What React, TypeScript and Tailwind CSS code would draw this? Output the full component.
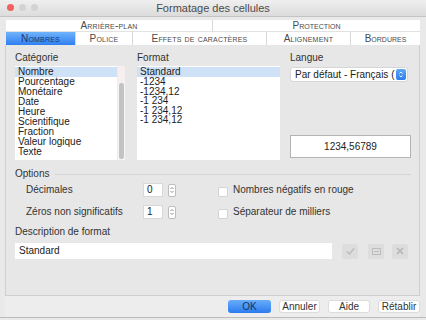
import React from "react";

const font = { fontFamily: '"Liberation Sans", Arial, sans-serif' };

function Stepper() {
  return (
    <div className="w-[8px] h-[13px] bg-white border border-[#bdbdbd] rounded-[2px] flex items-center justify-center">
      <svg width="6" height="10" viewBox="0 0 6 10">
        <path d="M1.5 4 L3 2.5 L4.5 4" fill="none" stroke="#7a7a7a" strokeWidth="0.8" />
        <path d="M1.5 6 L3 7.5 L4.5 6" fill="none" stroke="#7a7a7a" strokeWidth="0.8" />
      </svg>
    </div>
  );
}

function Tab({ label, w, selected }: { label: string; w: string; selected?: boolean }) {
  return (
    <div
      className={
        "h-full flex items-center justify-center text-[10px] [font-variant:small-caps] tracking-[0.2px] border-r border-[#d8d8d8] " +
        w +
        (selected
          ? " bg-gradient-to-b from-[#6fb2fb] to-[#2f7ff1] text-[#18386e]"
          : " text-[#4a4a4a]")
      }
    >
      {label}
    </div>
  );
}

export default function App() {
  const categories = [
    "Nombre",
    "Pourcentage",
    "Monétaire",
    "Date",
    "Heure",
    "Scientifique",
    "Fraction",
    "Valeur logique",
    "Texte",
  ];
  const formats = ["Standard", "-1234", "-1234,12", "-1 234", "-1 234,12", "-1 234,12"];

  return (
    <div className="w-[426px] h-[320px] bg-[#e9e9e9] flex flex-col overflow-hidden text-[#222]" style={font}>
      {/* Title bar */}
      <div className="relative h-[17px] bg-gradient-to-b from-[#efefef] to-[#dcdcdc] border-b border-[#c4c4c4] flex items-center justify-center shrink-0">
        <div className="absolute left-[7px] top-[4px] flex gap-[5px]">
          <div className="w-[7px] h-[7px] rounded-full bg-[#f0625c]" />
          <div className="w-[7px] h-[7px] rounded-full bg-[#d3d3d3]" />
          <div className="w-[7px] h-[7px] rounded-full bg-[#d3d3d3]" />
        </div>
        <span className="text-[11px] text-[#4b4b4b] leading-none">Formatage des cellules</span>
      </div>

      <div className="h-[3px] shrink-0" />

      {/* Tabs row 1 */}
      <div className="ml-[6px] w-[414px] h-[11px] bg-white flex shrink-0">
        <Tab label="Arrière-plan" w="w-[207px]" />
        <div className="h-full w-[207px] flex items-center justify-center text-[10px] [font-variant:small-caps] text-[#4a4a4a]">
          Protection
        </div>
      </div>
      {/* Tabs row 2 */}
      <div className="ml-[6px] w-[414px] h-[14px] bg-white flex shrink-0 border-t border-[#e2e2e2]">
        <Tab label="Nombres" w="w-[70px]" selected />
        <Tab label="Police" w="w-[57px]" />
        <Tab label="Effets de caractères" w="w-[134px]" />
        <Tab label="Alignement" w="w-[84px]" />
        <div className="h-full w-[69px] flex items-center justify-center text-[10px] [font-variant:small-caps] text-[#4a4a4a]">
          Bordures
        </div>
      </div>

      {/* Panel */}
      <div className="ml-[5px] w-[415px] h-[251px] bg-[#e7e7e7] border-l border-r border-b border-[#cfcfcf] pl-[9px] pt-[7px] flex flex-col shrink-0 text-[10px]">
        <div className="flex">
          {/* Catégorie */}
          <div className="w-[110px] flex flex-col">
            <div className="h-[14px] leading-[11px] text-[#333]">Catégorie</div>
            <div className="h-[94px] bg-white flex">
              <div className="flex-1 pt-[1px]">
                {categories.map((c, i) => (
                  <div
                    key={c}
                    className={"h-[10px] leading-[10px] pl-[3px] " + (i === 0 ? "bg-[#cfe1f6]" : "")}
                  >
                    {c}
                  </div>
                ))}
              </div>
              <div className="w-[8px] flex flex-col bg-[#f6f6f6] border-l border-[#ececec]">
                <div className="h-[17px] bg-[#f7efee]" />
                <div className="flex-1 flex justify-center pb-[1px]">
                  <div className="w-[5px] h-full bg-[#c3c3c3] rounded-[2px]" />
                </div>
              </div>
            </div>
          </div>

          {/* Format */}
          <div className="w-[143px] ml-[12px] flex flex-col">
            <div className="h-[14px] leading-[11px] text-[#333]">Format</div>
            <div className="h-[94px] bg-white pt-[1px]">
              {formats.map((f, i) => (
                <div
                  key={i}
                  className={"h-[9.5px] leading-[9.5px] pl-[3px] " + (i === 0 ? "bg-[#cfe1f6] h-[10px] leading-[10px]" : "")}
                >
                  {f}
                </div>
              ))}
            </div>
          </div>

          {/* Langue */}
          <div className="w-[121px] ml-[10px] flex flex-col">
            <div className="h-[15px] leading-[11px] text-[#333]">Langue</div>
            <div className="w-[118px] h-[15px] bg-white rounded-[3px] border border-[#d6d6d6] flex items-center pl-[4px] pr-[1px]">
              <span className="flex-1 truncate leading-none">Par défaut - Français (</span>
              <div className="w-[10px] h-[11px] rounded-[2px] bg-gradient-to-b from-[#5fa8f7] to-[#2d7cf0] flex items-center justify-center">
                <svg width="6" height="9" viewBox="0 0 6 9">
                  <path d="M1.5 3.5 L3 2 L4.5 3.5" fill="none" stroke="white" strokeWidth="0.9" />
                  <path d="M1.5 5.5 L3 7 L4.5 5.5" fill="none" stroke="white" strokeWidth="0.9" />
                </svg>
              </div>
            </div>
            <div className="mt-[53px] w-[121px] h-[23px] bg-white border border-[#b4b4b4] flex items-center justify-center">
              1234,56789
            </div>
          </div>
        </div>

        {/* Options header */}
        <div className="mt-[8px] h-[12px] flex items-center pr-[8px]">
          <span className="leading-none text-[#333]">Options</span>
          <div className="flex-1 ml-[6px] h-px bg-[#d4d4d4]" />
        </div>

        <div className="mt-[3px] pl-[11px] flex flex-col gap-[8px]">
          {[
            ["Décimales", "0", "Nombres négatifs en rouge"],
            ["Zéros non significatifs", "1", "Séparateur de milliers"],
          ].map(([l, v, c]) => (
            <div key={l} className="h-[14px] flex items-center">
              <span className="w-[117px] leading-none text-[#333]">{l}</span>
              <div className="w-[20px] h-[14px] bg-white border border-[#d8d8d8] flex items-center pl-[3px] leading-none">
                {v}
              </div>
              <div className="ml-[5px]">
                <Stepper />
              </div>
              <div className="ml-[42px] w-[10px] h-[10px] bg-white rounded-[2px] border border-[#d4d4d4] mt-[3px]" />
              <span className="ml-[5px] leading-none text-[#333]">{c}</span>
            </div>
          ))}
        </div>

        <div className="mt-[7px] h-[12px] flex items-center leading-none text-[#333]">Description de format</div>
        <div className="mt-[5px] flex items-center">
          <div className="w-[317px] h-[16px] bg-white flex items-center pl-[4px] leading-none">Standard</div>
          <div className="ml-[10px] w-[16px] h-[15px] bg-[#dddddd] rounded-[2px] flex items-center justify-center">
            <svg width="9" height="8" viewBox="0 0 9 8">
              <path d="M1 4.5 L3.5 7 L8 1.5" fill="none" stroke="#bdbdbd" strokeWidth="1.5" />
            </svg>
          </div>
          <div className="ml-[10px] w-[16px] h-[15px] bg-[#dddddd] rounded-[2px] flex items-center justify-center">
            <svg width="9" height="7" viewBox="0 0 9 7">
              <rect x="0.5" y="0.5" width="8" height="6" fill="none" stroke="#bdbdbd" />
              <path d="M2 3.5 H7" stroke="#bdbdbd" />
            </svg>
          </div>
          <div className="ml-[8px] w-[16px] h-[15px] bg-[#dddddd] rounded-[2px] flex items-center justify-center">
            <svg width="8" height="8" viewBox="0 0 8 8">
              <path d="M1 1 L7 7 M7 1 L1 7" stroke="#b5b5b5" strokeWidth="1.6" />
            </svg>
          </div>
        </div>
      </div>

      {/* Bottom bar */}
      <div className="h-[21px] ml-[5px] w-[415px] flex items-center justify-end gap-[8px] shrink-0 text-[10px] bg-[#ededed]">
        <div className="w-[43px] h-[13px] rounded-[3px] bg-gradient-to-b from-[#68adfa] to-[#2a7af0] flex items-center justify-center text-[#143266] leading-none">
          OK
        </div>
        <div className="w-[41px] h-[13px] rounded-[3px] bg-white border border-[#dcdcdc] flex items-center justify-center leading-none text-[#333]">
          Annuler
        </div>
        <div className="w-[42px] h-[13px] rounded-[3px] bg-white border border-[#dcdcdc] flex items-center justify-center leading-none text-[#333]">
          Aide
        </div>
        <div className="w-[42px] h-[13px] rounded-[3px] bg-white border border-[#dcdcdc] flex items-center justify-center leading-none text-[#333]">
          Rétablir
        </div>
      </div>
      <div className="h-px bg-[#bcbcbc] shrink-0" />
    </div>
  );
}
